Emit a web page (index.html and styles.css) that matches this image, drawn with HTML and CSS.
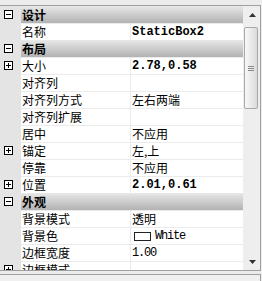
FILE: index.html
```html
<!DOCTYPE html>
<html lang="zh-CN">
<head>
<meta charset="utf-8">
<title>属性</title>
<link rel="stylesheet" href="styles.css">
</head>
<body>
<div class="frame">
  <div class="grid">
    <div class="list">
      <div class="row cat">
        <div class="gut"><svg width="9" height="9"><rect x="0.5" y="0.5" width="8" height="8" fill="#fff" stroke="#000"/><path d="M2 4.5h5" stroke="#000"/></svg></div>
        <div class="label">设计</div>
      </div>
      <div class="row">
        <div class="gut"></div>
        <div class="name">名称</div>
        <div class="val mono bold">StaticBox2</div>
      </div>
      <div class="row cat">
        <div class="gut"><svg width="9" height="9"><rect x="0.5" y="0.5" width="8" height="8" fill="#fff" stroke="#000"/><path d="M2 4.5h5" stroke="#000"/></svg></div>
        <div class="label">布局</div>
      </div>
      <div class="row">
        <div class="gut"><svg width="9" height="9"><rect x="0.5" y="0.5" width="8" height="8" fill="#fff" stroke="#000"/><path d="M2 4.5h5M4.5 2v5" stroke="#000"/></svg></div>
        <div class="name">大小</div>
        <div class="val mono bold">2.78,0.58</div>
      </div>
      <div class="row">
        <div class="gut"></div>
        <div class="name">对齐列</div>
        <div class="val"></div>
      </div>
      <div class="row">
        <div class="gut"></div>
        <div class="name">对齐列方式</div>
        <div class="val">左右两端</div>
      </div>
      <div class="row">
        <div class="gut"></div>
        <div class="name">对齐列扩展</div>
        <div class="val"></div>
      </div>
      <div class="row">
        <div class="gut"></div>
        <div class="name">居中</div>
        <div class="val">不应用</div>
      </div>
      <div class="row">
        <div class="gut"><svg width="9" height="9"><rect x="0.5" y="0.5" width="8" height="8" fill="#fff" stroke="#000"/><path d="M2 4.5h5M4.5 2v5" stroke="#000"/></svg></div>
        <div class="name">锚定</div>
        <div class="val">左,上</div>
      </div>
      <div class="row">
        <div class="gut"></div>
        <div class="name">停靠</div>
        <div class="val">不应用</div>
      </div>
      <div class="row">
        <div class="gut"><svg width="9" height="9"><rect x="0.5" y="0.5" width="8" height="8" fill="#fff" stroke="#000"/><path d="M2 4.5h5M4.5 2v5" stroke="#000"/></svg></div>
        <div class="name">位置</div>
        <div class="val mono bold">2.01,0.61</div>
      </div>
      <div class="row cat">
        <div class="gut"><svg width="9" height="9"><rect x="0.5" y="0.5" width="8" height="8" fill="#fff" stroke="#000"/><path d="M2 4.5h5" stroke="#000"/></svg></div>
        <div class="label">外观</div>
      </div>
      <div class="row">
        <div class="gut"></div>
        <div class="name">背景模式</div>
        <div class="val">透明</div>
      </div>
      <div class="row">
        <div class="gut"></div>
        <div class="name">背景色</div>
        <div class="val"><span class="swatch"></span><span class="mono thin">White</span></div>
      </div>
      <div class="row">
        <div class="gut"></div>
        <div class="name">边框宽度</div>
        <div class="val mono thin">1.00</div>
      </div>
      <div class="row">
        <div class="gut"><svg width="9" height="9"><rect x="0.5" y="0.5" width="8" height="8" fill="#fff" stroke="#000"/><path d="M2 4.5h5M4.5 2v5" stroke="#000"/></svg></div>
        <div class="name">边框模式</div>
        <div class="val"></div>
      </div>
    </div>
    <div class="scrollbar">
      <div class="sbtn"><svg width="7" height="4"><polygon points="0,4 7,4 3.5,0" fill="#333"/></svg></div>
      <div class="track">
        <div class="thumb"><span class="grip"></span><span class="grip"></span><span class="grip"></span></div>
      </div>
      <div class="sbtn"><svg width="7" height="4"><polygon points="0,0 7,0 3.5,4" fill="#333"/></svg></div>
    </div>
  </div>
  <div class="panel"></div>
</div>
</body>
</html>
```

FILE: styles.css
```css
html, body {
  margin: 0;
  padding: 0;
  background: #ececec;
}
body {
  font-family: "Noto Sans CJK SC", "Liberation Sans", sans-serif;
  font-size: 12px;
  color: #000;
  overflow: hidden;
  width: 262px;
  height: 281px;
}
.frame {
  width: 262px;
  padding-top: 5px;
}
.grid {
  display: flex;
  width: 260px;
  height: 264px;
  border-top: 1px solid #a0a0a0;
  border-bottom: 1px solid #a0a0a0;
  border-right: 1px solid #a0a0a0;
  background: #e4e4e4;
}
.list {
  width: 243px;
  height: 264px;
  overflow: hidden;
  display: flex;
  flex-direction: column;
}
.row {
  display: flex;
  height: 17px;
  flex: none;
}
.gut {
  width: 21px;
  flex: none;
  box-sizing: border-box;
  padding-left: 4px;
  display: flex;
  align-items: center;
  background: #e4e4e4;
}
.gut svg {
  display: block;
}
.name, .val {
  box-sizing: border-box;
  height: 17px;
  line-height: 16px;
  border-top: 1px solid #ebebeb;
  background: #fff;
  padding-left: 1px;
  white-space: nowrap;
  overflow: hidden;
}
.name {
  width: 110px;
  border-right: 1px solid #ebebeb;
}
.val {
  flex: 1;
  display: flex;
  align-items: center;
}
.label {
  flex: 1;
  line-height: 17px;
  padding-left: 1px;
  font-weight: bold;
  background: linear-gradient(#e8e8e8, #b2b2b2);
}
.mono {
  font-family: "Liberation Mono", "DejaVu Sans Mono", monospace;
}
.bold {
  font-weight: bold;
}
.thin {
  letter-spacing: -1.2px;
}
.swatch {
  display: inline-block;
  width: 15px;
  height: 7px;
  border: 1px solid #222;
  background: #fff;
  margin: 0 4px 0 2px;
}
.scrollbar {
  width: 17px;
  flex: none;
  display: flex;
  flex-direction: column;
  background: #eeeeee;
}
.sbtn {
  height: 17px;
  flex: none;
  display: flex;
  align-items: center;
  justify-content: center;
}
.sbtn svg {
  display: block;
  margin-left: 1px;
}
.track {
  flex: 1;
  padding-top: 4px;
}
.thumb {
  box-sizing: border-box;
  width: 14px;
  height: 82px;
  margin-left: 1px;
  border: 1px solid #a8a8a8;
  border-radius: 2px;
  background: linear-gradient(to right, #f8f8f8, #dadada);
  display: flex;
  flex-direction: column;
  align-items: center;
  justify-content: center;
  gap: 1px;
}
.grip {
  display: block;
  width: 6px;
  height: 1px;
  background: #8a8a8a;
}
.panel {
  margin-top: 3px;
  width: 260px;
  height: 10px;
  border-top: 1px solid #a0a0a0;
  border-right: 1px solid #a0a0a0;
  background: #f0f0f0;
}
```
